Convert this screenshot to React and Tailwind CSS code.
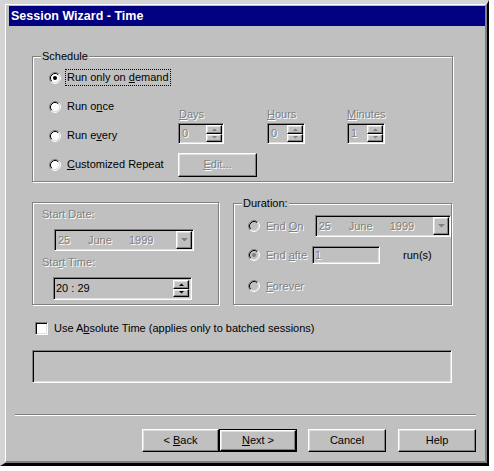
import React from "react";

const SUNKEN =
  "border border-t-[#808080] border-l-[#808080] border-r-white border-b-white shadow-[inset_1px_1px_0_#000000,inset_-1px_-1px_0_#dfdfdf]";
const RAISED =
  "border border-t-white border-l-white border-r-black border-b-black shadow-[inset_-1px_-1px_0_#808080,inset_1px_1px_0_#dfdfdf]";
const DIS = "text-[#808080] [text-shadow:1px_1px_0_#ffffff]";
const GROUP =
  "relative box-border border border-[#808080] shadow-[inset_1px_1px_0_#ffffff,1px_1px_0_#ffffff]";

function U({ children }) {
  return <span className="underline decoration-1 underline-offset-[1px]">{children}</span>;
}

function Radio({ checked, disabled }) {
  return (
    <svg width="12" height="12" viewBox="0 0 12 12" className="shrink-0">
      <circle cx="6" cy="6" r="4.5" fill={disabled ? "#c0c0c0" : "#ffffff"} />
      <path d="M2.11 9.89A5.5 5.5 0 0 1 9.89 2.11" stroke="#808080" fill="none" />
      <path d="M9.89 2.11A5.5 5.5 0 0 1 2.11 9.89" stroke="#ffffff" fill="none" />
      <path d="M2.82 9.18A4.5 4.5 0 0 1 9.18 2.82" stroke="#000000" fill="none" />
      <path d="M9.18 2.82A4.5 4.5 0 0 1 2.82 9.18" stroke="#dfdfdf" fill="none" />
      {checked && <circle cx="6" cy="6" r="2" fill={disabled ? "#808080" : "#000000"} />}
    </svg>
  );
}

function SpinArrows({ disabled }) {
  const c = disabled ? "#808080" : "#000000";
  return (
    <div className="flex h-full w-[16px] flex-col">
      <div className={`flex flex-1 items-center justify-center ${RAISED}`}>
        <svg width="5" height="3" viewBox="0 0 5 3">
          <polygon points="0,3 5,3 2.5,0.5" fill={c} />
        </svg>
      </div>
      <div className={`flex flex-1 items-center justify-center ${RAISED}`}>
        <svg width="5" height="3" viewBox="0 0 5 3">
          <polygon points="0,0 5,0 2.5,2.5" fill={c} />
        </svg>
      </div>
    </div>
  );
}

function SpinBox({ className, value, disabled }) {
  return (
    <div className={`flex h-[21px] p-px ${SUNKEN} ${className}`}>
      <div className={`flex flex-1 items-center pl-[2px] ${disabled ? DIS : ""}`}>{value}</div>
      <SpinArrows disabled={disabled} />
    </div>
  );
}

function Combo({ className, disabled }) {
  return (
    <div className={`flex h-[22px] p-px ${SUNKEN} ${className}`}>
      <div className={`flex flex-1 items-center pl-[2px] ${disabled ? DIS : ""}`}>
        <span className="w-[30px]">25</span>
        <span className="w-[41px]">June</span>
        <span>1999</span>
      </div>
      <div className={`flex w-[16px] items-center justify-center ${RAISED}`}>
        <svg width="7" height="4" viewBox="0 0 7 4">
          <polygon points="0,0 7,0 3.5,3.5" fill={disabled ? "#808080" : "#000000"} />
        </svg>
      </div>
    </div>
  );
}

function Btn({ children, className, def, disabled }) {
  if (def) {
    return (
      <div className={`h-[23px] border border-black ${className}`}>
        <div className={`flex h-full items-center justify-center ${RAISED}`}>{children}</div>
      </div>
    );
  }
  return (
    <div className={`flex h-[23px] items-center justify-center ${RAISED} ${disabled ? DIS : ""} ${className}`}>
      {children}
    </div>
  );
}

export default function App() {
  return (
    <div className="h-[471px] w-[494px] bg-white font-['Liberation_Sans',Arial,sans-serif] text-[11px] leading-[13px] text-black">
      <div className="box-border flex h-[466px] w-[489px] flex-col border-t-[4px] border-r-[2px] border-b-[3px] border-l-[5px] border-t-[#d4d4d4] border-r-black border-b-black border-l-[#d4d4d4]">
        <div className="flex flex-1 flex-col border-t border-r-2 border-b-2 border-l border-t-white border-r-[#808080] border-b-[#808080] border-l-white bg-[#c0c0c0]">
          {/* Title bar */}
          <div className="mt-[1px] ml-[3px] flex h-[20px] items-center bg-[#000080] pl-[2px] text-[12.5px] font-bold text-white">
            Session Wizard - Time
          </div>

          {/* Schedule group */}
          <div className={`mt-[30px] ml-[26px] h-[126px] w-[421px] ${GROUP}`}>
            <span className="absolute top-[-7px] left-[8px] bg-[#c0c0c0] px-[1px]">Schedule</span>
            <div className="grid grid-cols-[145px_89px_80px_1fr] grid-rows-[29px_29px_29px_29px] pt-[6px]">
              <div className="col-start-1 row-start-1 flex items-center gap-[5px] pl-[16px]">
                <Radio checked />
                <span className="px-[1px] py-[1px] outline-1 outline-black outline-dotted">
                  Run only on <U>d</U>emand
                </span>
              </div>
              <div className="col-start-1 row-start-2 flex items-center gap-[5px] pl-[16px]">
                <Radio />
                <span className="px-[1px]">
                  Run o<U>n</U>ce
                </span>
              </div>
              <div className="col-start-1 row-start-3 flex items-center gap-[5px] pl-[16px]">
                <Radio />
                <span className="px-[1px]">
                  Run e<U>v</U>ery
                </span>
              </div>
              <div className="col-start-1 row-start-4 flex items-center gap-[5px] pl-[16px]">
                <Radio />
                <span className="px-[1px]">
                  <U>C</U>ustomized Repeat
                </span>
              </div>

              <div className={`col-start-2 row-start-2 self-end pl-[1px] ${DIS}`}>
                <U>D</U>ays
              </div>
              <div className={`col-start-3 row-start-2 self-end ${DIS}`}>
                <U>H</U>ours
              </div>
              <div className={`col-start-4 row-start-2 self-end ${DIS}`}>
                <U>M</U>inutes
              </div>

              <div className="col-start-2 row-start-3 mt-[2px] self-start">
                <SpinBox className="w-[46px]" value="0" disabled />
              </div>
              <div className="col-start-3 row-start-3 mt-[2px] self-start">
                <SpinBox className="w-[38px]" value="0" disabled />
              </div>
              <div className="col-start-4 row-start-3 mt-[2px] self-start">
                <SpinBox className="w-[38px]" value="1" disabled />
              </div>

              <div className="col-span-2 col-start-2 row-start-4 self-center">
                <Btn className="h-[24px] w-[79px]" disabled>
                  <span>
                    <U>E</U>dit...
                  </span>
                </Btn>
              </div>
            </div>
          </div>

          {/* Lower boxes */}
          <div className="mt-[20px] ml-[26px] flex items-start gap-[14px]">
            <div className={`h-[103px] w-[187px] ${GROUP}`}>
              <div className={`mt-[5px] ml-[9px] ${DIS}`}>Start Date:</div>
              <Combo className="mt-[8px] ml-[21px] w-[140px]" disabled />
              <div className={`mt-[5px] ml-[9px] ${DIS}`}>
                Sta<U>r</U>t Time:
              </div>
              <div className={`mt-[8px] ml-[20px] flex h-[23px] w-[139px] p-px ${SUNKEN}`}>
                <div className="flex flex-1 items-center pl-[1px]">20 : 29</div>
                <div className="py-[1px] pr-[1px]">
                  <SpinArrows />
                </div>
              </div>
            </div>

            <div className={`mt-[1px] h-[102px] w-[219px] ${GROUP}`}>
              <span className="absolute top-[-7px] left-[8px] bg-[#c0c0c0] px-[1px]">Duration:</span>
              <div className="mt-[11px] flex h-[22px] items-center pl-[14px]">
                <div className={`flex w-[58px] items-center gap-[6px] whitespace-nowrap ${DIS}`}>
                  <Radio disabled />
                  <span>
                    End <U>O</U>n
                  </span>
                </div>
                <Combo className="ml-[9px] w-[137px]" disabled />
              </div>
              <div className="mt-[8px] flex h-[20px] items-center pl-[14px]">
                <div className={`flex w-[58px] items-center gap-[6px] whitespace-nowrap ${DIS}`}>
                  <Radio checked disabled />
                  <span>
                    End <U>a</U>fte
                  </span>
                </div>
                <div className={`ml-[6px] flex h-[18px] w-[68px] items-center pl-[2px] ${SUNKEN} ${DIS}`}>1</div>
                <span className="ml-[23px] text-black">run(s)</span>
              </div>
              <div className="mt-[12px] flex h-[18px] items-center pl-[14px]">
                <div className={`flex w-[58px] items-center gap-[6px] whitespace-nowrap ${DIS}`}>
                  <Radio disabled />
                  <span>
                    <U>F</U>orever
                  </span>
                </div>
              </div>
            </div>
          </div>

          {/* Checkbox */}
          <div className="mt-[17px] ml-[29px] flex h-[13px] items-center gap-[6px]">
            <div className={`h-[13px] w-[13px] bg-white ${SUNKEN}`} />
            <span>
              Use A<U>b</U>solute Time (applies only to batched sessions)
            </span>
          </div>

          {/* Status box */}
          <div className={`mt-[15px] ml-[26px] h-[33px] w-[420px] ${SUNKEN}`} />

          {/* Separator */}
          <div className="mt-[31px] ml-[9px] h-[2px] w-[461px] border-t border-b border-t-[#808080] border-b-white" />

          {/* Buttons */}
          <div className="mt-[13px] flex justify-end pr-[9px]">
            <Btn className="w-[77px]">
              <span>
                &lt; <U>B</U>ack
              </span>
            </Btn>
            <Btn className="w-[78px]" def>
              <span>
                <U>N</U>ext &gt;
              </span>
            </Btn>
            <Btn className="ml-[11px] w-[78px]">Cancel</Btn>
            <Btn className="ml-[12px] w-[78px]">Help</Btn>
          </div>
        </div>
      </div>
    </div>
  );
}
